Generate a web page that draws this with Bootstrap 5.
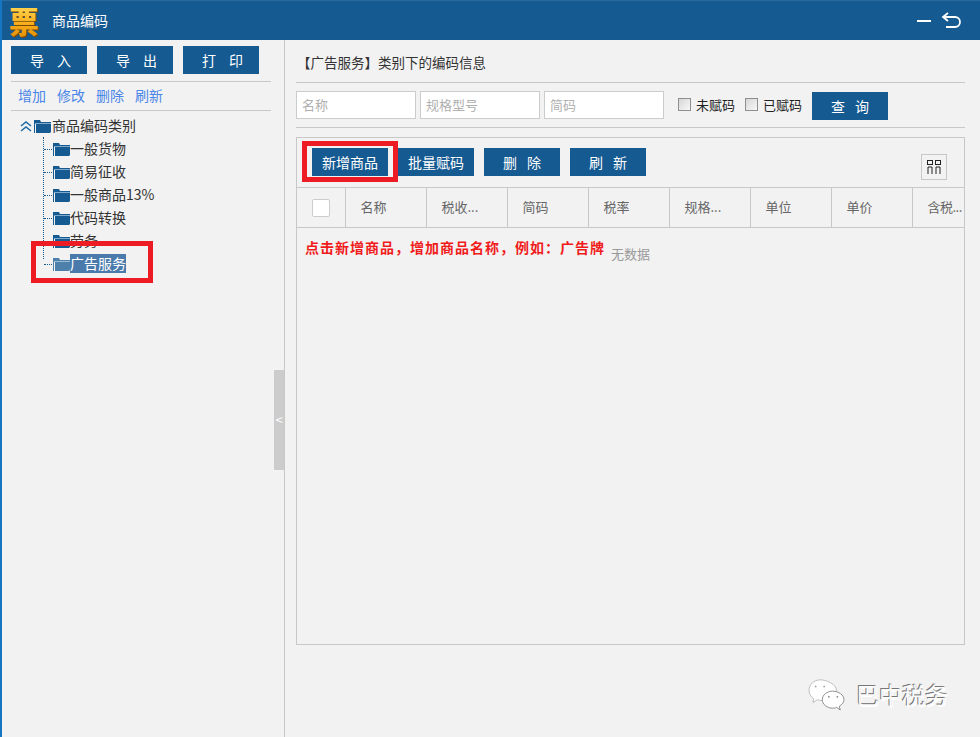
<!doctype html>
<html lang="zh-CN">
<head>
<meta charset="utf-8">
<title>商品编码</title>
<link rel="stylesheet" href="https://cdn.jsdelivr.net/npm/bootstrap@5.3.0/dist/css/bootstrap.min.css">
<style>
html,body{height:737px;overflow:hidden}
body{background:#f2f2f2;font-family:"Noto Sans CJK SC","Liberation Sans",sans-serif;font-size:14px;color:#333;border-left:2px solid #1577c2;position:relative}
.app-head{height:40px;background:#165a92;color:#fff;border-top:1px solid #2b6a9c}
.logo-mark{width:40px;height:39px;margin-left:7px;font-size:30px;font-weight:900;line-height:39px;background:linear-gradient(#ffe060,#fbb020 55%,#e08a00);-webkit-background-clip:text;background-clip:text;color:transparent;filter:drop-shadow(1px 1px 0 #7a4a00)}
.app-title{margin-left:3px;font-size:14px}
.head-tools{margin-right:19px;gap:9px}
.main-row{height:697px}
.left-pane{width:283px;padding:6px 13px 0 9px;border-right:1px solid #c8c8c8;position:relative;flex:none}
.act-row{column-gap:10px}
.act-btn{width:76px;height:28px;padding:0;border:0;border-radius:0;background:#165a92;color:#fff;font-size:14px;line-height:28px}
.act-btn:hover{background:#165a92;color:#fff}
.wide-ch{letter-spacing:13px;padding-left:16px}
.mid-ch{letter-spacing:10px;padding-left:10px}
.link-bar{margin-top:7px;height:30px;border-top:1px solid #c8c8c8;border-bottom:1px solid #c8c8c8;gap:11px;padding-left:7px;width:260px}
.link-bar a{color:#4a86e8;text-decoration:none;font-size:14px;line-height:26px}
.tree-box{margin:3px 0 0 8px}
.tree-root{height:23px;gap:1px}
.tree-kids{margin-left:24px;border-left:1px dotted #165a92;height:122px;width:150px}
.tree-kid{height:23px;position:relative;padding-left:9px;color:#333}
.tree-kid::before{content:"";width:8px;border-top:1px dotted #165a92;position:absolute;left:0;top:12px}
.tree-kid.is-on{color:#fff}
.tree-kid.is-on .kid-txt{background:#4a7aab;line-height:19px}
.tree-kid.is-on svg{opacity:.75}
.kid-txt{line-height:23px;white-space:nowrap}
.red-frame{position:absolute;border:5px solid #ed1c24;pointer-events:none;z-index:5}
.red-tree{left:29px;top:201px;width:122px;height:42px}
.red-add{left:5px;top:3px;width:96px;height:41px}
.collapse-tab{position:absolute;right:0;top:330px;width:10px;height:100px;background:#ccc;color:#fff;font-size:13px;line-height:100px;text-align:center}
.right-pane{padding:0 15px 0 11px;width:695px;flex:none}
.title-row{height:43px;border-bottom:1px solid #c8c8c8;padding-left:1px;line-height:44px;font-size:13.500px}
.query-row{height:45px;border-bottom:1px solid #c8c8c8;padding-top:8px;gap:4px}
.query-input{width:120px;height:28px;border:1px solid #ccc;border-radius:0;padding:0 5px 2px;font-size:13px;background:#fff}
.query-input::placeholder{color:#b0b0b0}
.check-item{gap:5px;color:#222;font-size:13px;margin-right:2px}
.check-first{margin-left:10px}
.win-check{width:13px;height:13px;margin:0;border:1px solid #8e8e8e;border-radius:0;background:linear-gradient(135deg,#d6d6d6,#f8f8f8);appearance:none;flex:none}
.query-btn{margin-top:1px}
.grid-panel{margin-top:9px;height:508px;border:1px solid #c8c8c8;position:relative}
.grid-bar{height:49px;padding:10px 17px 0 15px;gap:10px}
.grid-cols{margin-left:auto;margin-top:6px;width:26px;height:26px;border:1px solid #c8c8c8;border-radius:0;background:#f2f2f2;padding:0}
.grid-table{table-layout:fixed;width:667px;margin:0;border-collapse:collapse;--bs-table-bg:transparent}
.grid-table th{height:40px;padding:0 0 2px 15px;border:1px solid #c8c8c8;border-width:1px 1px 1px 0;font-weight:400;color:#666;font-size:13px;vertical-align:middle;white-space:nowrap;overflow:hidden}
.grid-table th:first-child{padding-bottom:0}
.grid-table th:last-child{border-right:0;letter-spacing:-.5px}
.grid-c0{width:48px}
.grid-cn{width:81px}
.grid-cz{width:52px}
.head-check{display:block;width:18px;height:18px;margin:0;background:#fff;border:1px solid #ccc;border-radius:2px;appearance:none}
.empty-row{padding:10px 0 0 8px;gap:6px}
.empty-tip{color:#f01c1c;font-weight:700;font-size:14px;line-height:18px;letter-spacing:1px}
.empty-note{color:#999;font-size:13px;line-height:18px;margin-top:7px}
.stamp{position:absolute;right:32px;bottom:26px;gap:9px;z-index:4}
.stamp-txt{font-size:23px;line-height:30px;color:#fbfbfb;text-shadow:-1px -1px 0 #777,0 -1px 0 #bbb,1px 1px 0 #fff}
.svg-defs{display:none}
</style>
</head>
<body>
<svg class="svg-defs"><symbol id="fold" viewBox="0 0 17 14"><path d="M0 1h6l1 2h10v1H1v10H0z" fill="#165a92"/><path d="M2 5h15v8l-1 1H2z" fill="#165a92"/><path d="M1 4h16v1H1z" fill="#7fa8cb"/></symbol></svg>
<header class="app-head d-flex align-items-center">
  <div class="logo-mark">票</div>
  <div class="app-title">商品编码</div>
  <div class="head-tools d-flex align-items-center ms-auto">
    <svg width="16" height="16" viewBox="0 0 16 16"><path d="M1 8h14" stroke="#fff" stroke-width="2"/></svg>
    <svg width="20" height="20" viewBox="0 0 20 20" fill="none"><path d="M7 2 2 6l5 4M2 6h12a4.500 4.500 0 0 1 0 10H5" stroke="#fff" stroke-width="1.800"/></svg>
  </div>
</header>
<div class="main-row d-flex">
  <aside class="left-pane">
    <div class="act-row d-flex">
      <button class="btn act-btn"><span class="wide-ch">导入</span></button>
      <button class="btn act-btn"><span class="wide-ch">导出</span></button>
      <button class="btn act-btn"><span class="wide-ch">打印</span></button>
    </div>
    <div class="link-bar d-flex"><a href="#">增加</a><a href="#">修改</a><a href="#">删除</a><a href="#">刷新</a></div>
    <div class="tree-box">
      <div class="tree-root d-flex align-items-center">
        <svg width="14" height="12" viewBox="0 0 14 12" fill="none"><path d="M2 6l5-4 5 4M2 11l5-4 5 4" stroke="#1d6aa5" stroke-width="1.500"/></svg>
        <svg width="17" height="14"><use href="#fold"/></svg>
        <span class="kid-txt">商品编码类别</span>
      </div>
      <div class="tree-kids">
        <div class="tree-kid d-flex align-items-center"><svg width="17" height="14"><use href="#fold"/></svg><span class="kid-txt">一般货物</span></div>
        <div class="tree-kid d-flex align-items-center"><svg width="17" height="14"><use href="#fold"/></svg><span class="kid-txt">简易征收</span></div>
        <div class="tree-kid d-flex align-items-center"><svg width="17" height="14"><use href="#fold"/></svg><span class="kid-txt">一般商品13%</span></div>
        <div class="tree-kid d-flex align-items-center"><svg width="17" height="14"><use href="#fold"/></svg><span class="kid-txt">代码转换</span></div>
        <div class="tree-kid d-flex align-items-center"><svg width="17" height="14"><use href="#fold"/></svg><span class="kid-txt">劳务</span></div>
        <div class="tree-kid is-on d-flex align-items-center"><svg width="17" height="14"><use href="#fold"/></svg><span class="kid-txt">广告服务</span></div>
      </div>
    </div>
    <div class="red-frame red-tree"></div>
    <div class="collapse-tab">&lt;</div>
  </aside>
  <main class="right-pane">
    <div class="title-row">【广告服务】类别下的编码信息</div>
    <div class="query-row d-flex">
      <input class="query-input" placeholder="名称">
      <input class="query-input" placeholder="规格型号">
      <input class="query-input" placeholder="简码">
      <label class="check-item check-first d-flex align-items-center align-self-start mt-1"><input type="checkbox" class="win-check">未赋码</label>
      <label class="check-item ms-1 d-flex align-items-center align-self-start mt-1"><input type="checkbox" class="win-check">已赋码</label>
      <button class="btn act-btn query-btn ms-1"><span class="mid-ch">查询</span></button>
    </div>
    <section class="grid-panel">
      <div class="grid-bar d-flex">
        <button class="btn act-btn">新增商品</button>
        <button class="btn act-btn">批量赋码</button>
        <button class="btn act-btn"><span class="mid-ch">删除</span></button>
        <button class="btn act-btn"><span class="mid-ch">刷新</span></button>
        <button class="btn grid-cols d-flex align-items-center justify-content-center" aria-label="列">
          <svg width="14" height="14" viewBox="0 0 14 14" fill="none" stroke="#222"><rect x=".5" y=".5" width="5" height="4"/><rect x="8.500" y=".5" width="5" height="4"/><path d="M1 7v7M5 7v7M9 7v7M13 7v7M1 7h4M9 7h4"/></svg>
        </button>
      </div>
      <table class="table grid-table">
        <colgroup><col class="grid-c0"><col class="grid-cn"><col class="grid-cn"><col class="grid-cn"><col class="grid-cn"><col class="grid-cn"><col class="grid-cn"><col class="grid-cn"><col class="grid-cz"></colgroup>
        <thead><tr>
          <th><input type="checkbox" class="head-check"></th>
          <th>名称</th><th>税收...</th><th>简码</th><th>税率</th><th>规格...</th><th>单位</th><th>单价</th><th>含税...</th>
        </tr></thead>
      </table>
      <div class="empty-row d-flex">
        <div class="empty-tip">点击新增商品，增加商品名称，例如：广告牌</div>
        <div class="empty-note">无数据</div>
      </div>
      <div class="red-frame red-add"></div>
    </section>
  </main>
</div>
<div class="stamp d-flex align-items-center">
  <svg width="40" height="34" viewBox="0 0 42 36"><path d="M14 3C7 3 2 8 2 14c0 4 2 7 5 9l-1 4 5-3c2 1 5 1 7 1 7 0 13-5 13-11S21 3 14 3z" fill="#fff" stroke="#bbb"/><path d="M27 15c-6 0-11 4-11 9s5 9 11 9c1 0 3 0 4-1l4 3-1-4c3-2 5-4 5-7 0-5-6-9-12-9z" fill="#fff" stroke="#888"/><circle cx="9" cy="10" r="1" fill="#aaa"/><circle cx="18" cy="10" r="1" fill="#aaa"/><circle cx="23" cy="21" r="1" fill="#888"/><circle cx="32" cy="21" r="1" fill="#888"/></svg>
  <span class="stamp-txt">巴中税务</span>
</div>
</body>
</html>
